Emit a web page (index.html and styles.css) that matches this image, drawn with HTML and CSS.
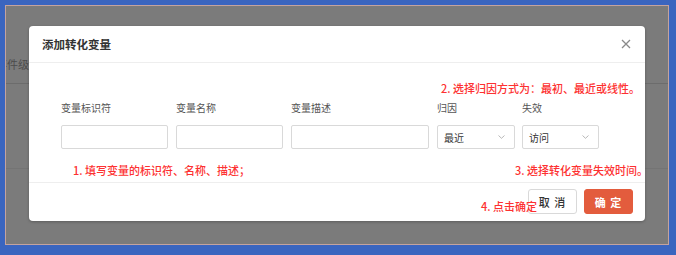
FILE: index.html
```html
<!DOCTYPE html>
<html lang="zh-CN">
<head>
  <meta charset="UTF-8">
  <meta name="viewport" content="width=device-width, initial-scale=1.0">
  <title>添加转化变量</title>
  <link rel="stylesheet" href="styles.css">
</head>
<body>
  <div class="screen">
    <span class="page-text">事件级</span>
    <div class="modal">
      <header class="modal-header">
        <h1>添加转化变量</h1>
        <span class="close">
          <svg width="10" height="10" viewBox="0 0 10 10"><path d="M1 1L9 9M9 1L1 9" stroke="#8a8a8a" stroke-width="1.3" fill="none"/></svg>
        </span>
      </header>
      <section class="modal-body">
        <div class="hint-row top">
          <span class="hint">2. 选择归因方式为：最初、最近或线性。</span>
        </div>
        <div class="fields">
          <label class="field w-sm">
            <span class="label">变量标识符</span>
            <span class="input"></span>
          </label>
          <label class="field w-sm">
            <span class="label">变量名称</span>
            <span class="input"></span>
          </label>
          <label class="field w-lg">
            <span class="label">变量描述</span>
            <span class="input"></span>
          </label>
          <label class="field w-sel">
            <span class="label">归因</span>
            <span class="input select">最近
              <svg width="7" height="4" viewBox="0 0 7 4"><path d="M0.5 0.5L3.5 3.3L6.5 0.5" stroke="#b0b0b0" stroke-width="0.9" fill="none"/></svg>
            </span>
          </label>
          <label class="field w-sel2">
            <span class="label">失效</span>
            <span class="input select">访问
              <svg width="7" height="4" viewBox="0 0 7 4"><path d="M0.5 0.5L3.5 3.3L6.5 0.5" stroke="#b0b0b0" stroke-width="0.9" fill="none"/></svg>
            </span>
          </label>
        </div>
        <div class="hint-row bottom">
          <span class="hint first">1. 填写变量的标识符、名称、描述；</span>
          <span class="hint last">3. 选择转化变量失效时间。</span>
        </div>
      </section>
      <footer class="modal-footer">
        <span class="hint step4">4. 点击确定</span>
        <button class="btn cancel">取 消</button>
        <button class="btn ok">确 定</button>
      </footer>
    </div>
  </div>
</body>
</html>
```

FILE: styles.css
```css
body {
  margin: 0;
  background: #3a65bf;
  font-family: "Noto Sans CJK SC", "Noto Sans", sans-serif;
}
.screen {
  position: relative;
  box-sizing: border-box;
  width: 664px;
  height: 240px;
  margin: 5px 0 0 5px;
  padding: 20px 0 0 23px;
  border: 1px solid #c4a39e;
  overflow: hidden;
  background:
    linear-gradient(#6c6c6c, #6c6c6c) 0 77px / 100% 1px no-repeat,
    linear-gradient(#747474, #747474) 0 162px / 100% 1px no-repeat,
    #7b7b7b;
}
.page-text {
  position: absolute;
  left: -10px;
  top: 50px;
  font-size: 11px;
  line-height: 16px;
  color: #4c4c4c;
}
.modal {
  position: relative;
  width: 616px;
  height: 195px;
  background: #fff;
  border-radius: 4px;
  box-shadow: 0 1px 3px rgba(0, 0, 0, 0.25);
  display: flex;
  flex-direction: column;
}
.modal-header {
  height: 36px;
  display: flex;
  align-items: center;
  justify-content: space-between;
  padding: 0 14px 0 13px;
  border-bottom: 1px solid #eeeeee;
}
.modal-header h1 {
  margin: 0;
  font-size: 11.5px;
  font-weight: 700;
  color: #333;
}
.close {
  display: flex;
}
.modal-body {
  padding: 18px 2px 5px 32px;
  border-bottom: 1px solid #eeeeee;
}
.hint-row {
  display: flex;
  font-size: 11px;
  line-height: 14px;
}
.hint-row.top {
  justify-content: flex-end;
  margin-right: 3px;
}
.hint {
  color: #fd3131;
  font-size: 11px;
  font-weight: 500;
  white-space: nowrap;
}
.fields {
  display: flex;
  gap: 8px;
  margin-top: 6px;
}
.field {
  display: flex;
  flex-direction: column;
  gap: 10px;
}
.w-sm { width: 107px; }
.w-lg { width: 138px; }
.w-sel { width: 78px; }
.w-sel2 { width: 77px; margin-left: -1px; }
.label {
  font-size: 10px;
  line-height: 14px;
  color: #555;
}
.input {
  box-sizing: border-box;
  height: 24px;
  border: 1px solid #d9d9d9;
  border-radius: 2px;
  background: #fff;
}
.select {
  display: flex;
  align-items: center;
  justify-content: space-between;
  padding: 0 9px 0 6px;
  font-size: 10px;
  color: #333;
}
.hint-row.bottom {
  margin-top: 14px;
}
.hint.first {
  margin-left: 12px;
}
.hint.last {
  margin-left: auto;
  margin-right: -5px;
}
.modal-footer {
  position: relative;
  flex: 1;
  display: flex;
  justify-content: flex-end;
  align-items: flex-start;
  gap: 7px;
  padding: 6px 12px 0 0;
}
.step4 {
  position: absolute;
  left: 452px;
  top: 16px;
  line-height: 14px;
  z-index: 1;
}
.btn {
  width: 49px;
  height: 25px;
  border-radius: 3px;
  font-family: inherit;
  font-size: 11px;
  letter-spacing: 1px;
  padding: 0;
  cursor: pointer;
}
.cancel {
  background: #fff;
  border: 1px solid #d9d9d9;
  color: #333;
  font-weight: 500;
}
.ok {
  background: #e35c3d;
  border: 1px solid #e35c3d;
  color: #fff;
  font-weight: 700;
}
```
